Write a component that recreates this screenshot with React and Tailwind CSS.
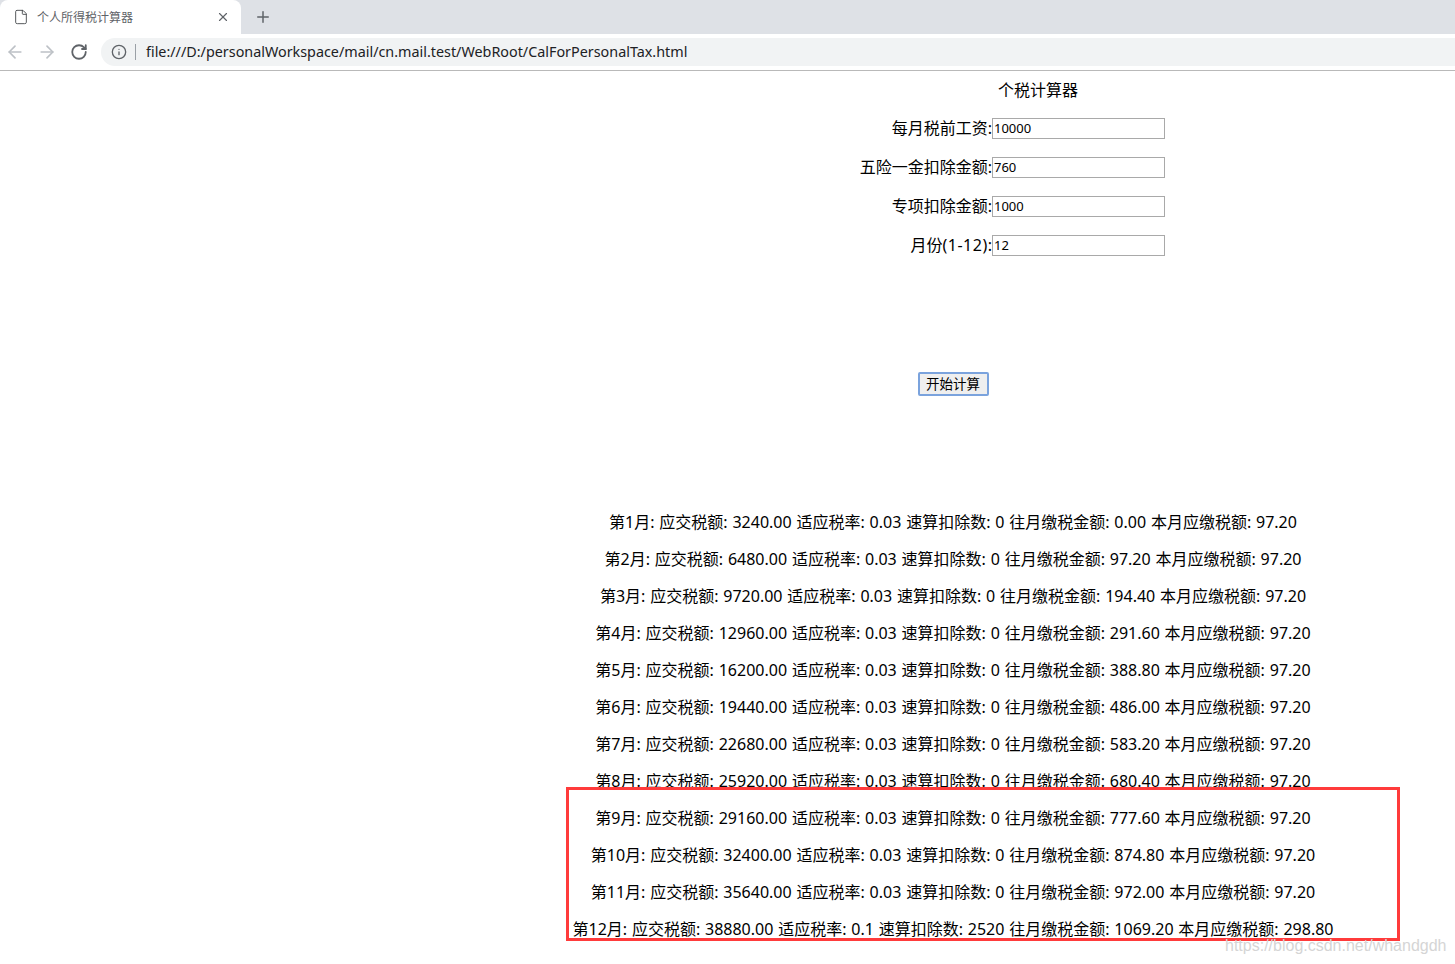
import React from "react";
import { ArrowLeft, ArrowRight, File, Plus, RotateCw, X, Info } from "lucide-react";

const rows = [
  ["第1月", "3240.00", "0.03", "0", "0.00", "97.20"],
  ["第2月", "6480.00", "0.03", "0", "97.20", "97.20"],
  ["第3月", "9720.00", "0.03", "0", "194.40", "97.20"],
  ["第4月", "12960.00", "0.03", "0", "291.60", "97.20"],
  ["第5月", "16200.00", "0.03", "0", "388.80", "97.20"],
  ["第6月", "19440.00", "0.03", "0", "486.00", "97.20"],
  ["第7月", "22680.00", "0.03", "0", "583.20", "97.20"],
  ["第8月", "25920.00", "0.03", "0", "680.40", "97.20"],
  ["第9月", "29160.00", "0.03", "0", "777.60", "97.20"],
  ["第10月", "32400.00", "0.03", "0", "874.80", "97.20"],
  ["第11月", "35640.00", "0.03", "0", "972.00", "97.20"],
  ["第12月", "38880.00", "0.1", "2520", "1069.20", "298.80"],
];

const fields = [
  [<>每月税前工资:</>, "10000"],
  [<>五险一金扣除金额:</>, "760"],
  [<>专项扣除金额:</>, "1000"],
  [<>月份<span className="tracking-[0.5px]">(1-12)</span>:</>, "12"],
];

function Chrome() {
  return (
    <div className="border-b border-[#b9b9b9]">
      <div className="flex h-[34px] items-center bg-[#dee1e6]">
        <div className="flex h-[34px] w-[241px] items-center rounded-t-lg bg-white pl-[13px] pr-[11px]">
          <File size={16} strokeWidth={1.3} className="text-[#3c4043]" />
          <span className="ml-2 flex-1 pt-[2px] text-xs text-[#5f6368]">个人所得税计算器</span>
          <X size={14} strokeWidth={2} className="text-[#5f6368]" />
        </div>
        <Plus size={18} strokeWidth={2} className="ml-[13px] text-[#5f6368]" />
      </div>
      <div className="flex h-[36px] items-center bg-white">
        <ArrowLeft size={20} strokeWidth={2} className="ml-[5px] text-[#bdc1c6]" />
        <ArrowRight size={20} strokeWidth={2} className="ml-3 text-[#bdc1c6]" />
        <RotateCw size={18} strokeWidth={2.4} className="ml-[13px] text-[#5f6368]" />
        <div className="ml-[13px] flex h-[28px] flex-1 items-center rounded-l-full bg-[#f1f3f4] pl-[10px]">
          <Info size={16} strokeWidth={2} className="text-[#5f6368]" />
          <span className="ml-2 h-[16px] w-px bg-[#9aa0a6]" />
          <span className="ml-[10px] text-[14.35px] text-[#202124]">
            file:///D:/personalWorkspace/mail/cn.mail.test/WebRoot/CalForPersonalTax.html
          </span>
        </div>
      </div>
    </div>
  );
}

export default function App() {
  return (
    <div className="relative h-[964px] overflow-hidden bg-white font-['Noto_Sans','Noto_Sans_CJK_SC',sans-serif] text-black">
      <Chrome />
      <div className="ml-[451px] flex flex-col items-center">
        <div className="ml-[170px] mt-[8px] h-[22px] text-base leading-[22px]">个税计算器</div>
        <div className="mt-[17px] flex flex-col gap-[18px] self-stretch">
          {fields.map(([label, value]) => (
            <div key={value} className="flex h-[21px] items-center">
              <label className="-mt-[1px] w-[541px] text-right text-base leading-[21px]">{label}</label>
              <input
                readOnly
                value={value}
                className="h-[21px] w-[173px] border border-[#a9a9a9] px-px pb-[2px] text-[13px] text-black outline-none"
              />
            </div>
          ))}
        </div>
        <button className="mt-[116px] h-[24px] w-[71px] rounded-[2px] border-2 border-[#7ba3dd] bg-[#efefef] text-[13.5px]">
          开始计算
        </button>
        <div className="mt-[116px] flex flex-col items-center gap-[16px]">
          {rows.map(([m, a, r, q, p, c]) => (
            <p key={m} className="h-[21px] whitespace-nowrap text-base leading-[21px] [word-spacing:0.65px]">
              {m}: 应交税额: {a} 适应税率: {r} 速算扣除数: {q} 往月缴税金额: {p} 本月应缴税额: {c}
            </p>
          ))}
        </div>
      </div>
      <div className="absolute left-[566px] top-[787px] h-[154px] w-[834px] border-[3px] border-[#ff3b3b]" />
      <div className="absolute left-[1225px] top-[934px] font-['Liberation_Sans',sans-serif] text-base text-[#d5d5d5]">https://blog.csdn.net/whandgdh</div>
    </div>
  );
}
